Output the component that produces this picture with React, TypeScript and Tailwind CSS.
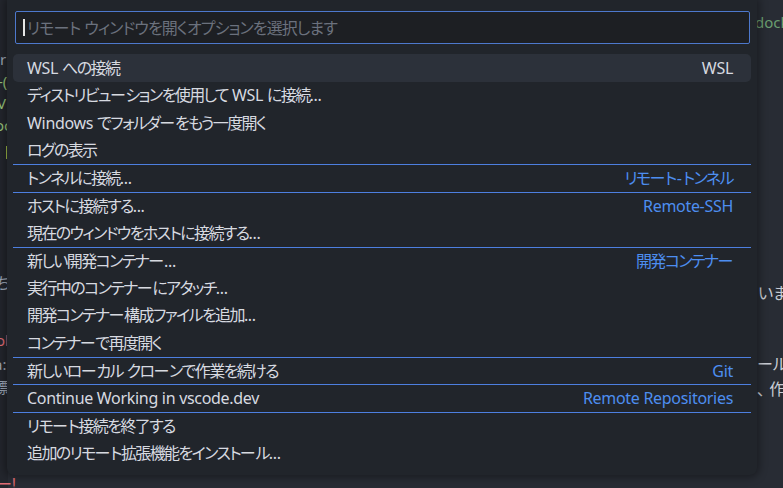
import React from "react";

type Item = { label: string; desc?: string; sep?: boolean; selected?: boolean };

const items: Item[] = [
  { label: "WSL への接続", desc: "WSL", selected: true },
  { label: "ディストリビューションを使用して WSL に接続..." },
  { label: "Windows でフォルダーをもう一度開く" },
  { label: "ログの表示" },
  { label: "トンネルに接続...", desc: "リモート-トンネル", sep: true },
  { label: "ホストに接続する...", desc: "Remote-SSH", sep: true },
  { label: "現在のウィンドウをホストに接続する..." },
  { label: "新しい開発コンテナー...", desc: "開発コンテナー", sep: true },
  { label: "実行中のコンテナーにアタッチ..." },
  { label: "開発コンテナー構成ファイルを追加..." },
  { label: "コンテナーで再度開く" },
  { label: "新しいローカル クローンで作業を続ける", desc: "Git", sep: true },
  { label: "Continue Working in vscode.dev", desc: "Remote Repositories", sep: true },
  { label: "リモート接続を終了する", sep: true },
  { label: "追加のリモート拡張機能をインストール..." },
];

const font = { fontFamily: '"Noto Sans", "Noto Sans CJK JP", sans-serif' };

function Mixed({ text, loose }: { text: string; loose?: boolean }) {
  const parts = text.split(/([\u3000-\u30fb\u30fd-\u30ff\u4e00-\u9fff\uff00-\uffef]+)/);
  return (
    <span>
      {parts.map((p, i) =>
        i % 2 === 1 ? (
          <span key={i} className={loose ? "tracking-[-0.9px]" : "tracking-[-1.6px]"}>
            {p}
          </span>
        ) : (
          <span key={i} className={p === "-" ? "mx-[1px]" : "tracking-[-0.3px]"}>
            {p}
          </span>
        )
      )}
    </span>
  );
}

export default function App() {
  return (
    <div
      className="relative w-[783px] h-[488px] overflow-hidden bg-[#282c34] text-[#abb2bf] whitespace-nowrap [font-feature-settings:'palt']"
      style={font}
    >
      {/* background editor fragments */}
      <div className="absolute left-0 top-0 w-[8px] h-full bg-[#23262d]" />
      <div className="absolute left-0 top-[52px] text-[15px] leading-none text-[#9da5b4]">r</div>
      <div className="absolute left-[-2px] top-[74px] text-[15px] leading-none text-[#98c379]">-(</div>
      <div className="absolute left-[-3px] top-[96px] text-[15px] leading-none text-[#98c379]">V</div>
      <div className="absolute left-[-5px] top-[118px] text-[15px] leading-none text-[#98c379]">oc</div>
      <div className="absolute left-[6px] top-[146px] w-[1px] h-[13px] bg-[#a4c24a]" />
      <div className="absolute left-[-4px] top-[275px] text-[16px] leading-none text-[#9da5b4]">ち</div>
      <div className="absolute left-[-4px] top-[333px] text-[15px] leading-none text-[#e06c75]">ol</div>
      <div className="absolute left-[-6px] top-[357px] text-[15px] leading-none text-[#9da5b4]">a:</div>
      <div className="absolute left-[-6px] top-[380px] text-[15px] leading-none text-[#9da5b4]">標</div>
      <div className="absolute left-[-4px] top-[476px] text-[16px] leading-none text-[#e06c75]">ー!</div>

      <div className="absolute left-[755px] top-[15px] text-[15px] leading-none text-[#6a9e6f]">dock</div>
      <div className="absolute left-[758px] top-[285px] text-[16px] leading-none text-[#c8ccd4]">いま</div>
      <div className="absolute left-[757px] top-[356px] text-[16px] leading-none text-[#c8ccd4]">ール</div>
      <div className="absolute left-[757px] top-[381px] text-[16px] leading-none text-[#c8ccd4]">、 作</div>

      {/* quick pick */}
      <div className="absolute left-[7px] top-0 w-[750px] h-[475px] bg-[#21252b] rounded-b-[7px] shadow-[0_0_8px_2px_rgba(0,0,0,0.4)] flex flex-col">
        <div className="pt-[11px] pl-[8px] pr-[7px]">
          <div className="h-[33px] bg-[#1d1f23] border border-[#4d78cc] rounded-[2px] flex items-center pl-[7px]">
            <span className="w-[2px] h-[17px] bg-[#e6e6e6] mr-[2px]" />
            <span className="text-[16px] text-[#6b717d]">
              <Mixed text="リモート ウィンドウを開くオプションを選択します" loose />
            </span>
          </div>
        </div>
        <div className="mt-[10px] px-[6px] flex flex-col">
          {items.map((it, i) => (
            <div
              key={i}
              className={
                "h-[27.5px] flex items-center justify-between pl-[14px] pr-[18px] rounded-[5px] text-[16px] text-[#d7dae0] " +
                (it.sep ? "border-t border-[#4d7fe0] rounded-t-none " : "") +
                (it.selected ? "bg-[#2c313a]" : "")
              }
            >
              <Mixed text={it.label} />
              {it.desc && (
                <span className={it.selected ? "text-[#d7dae0]" : "text-[#4d8ef0]"}>
                  <Mixed text={it.desc} />
                </span>
              )}
            </div>
          ))}
        </div>
      </div>
    </div>
  );
}
